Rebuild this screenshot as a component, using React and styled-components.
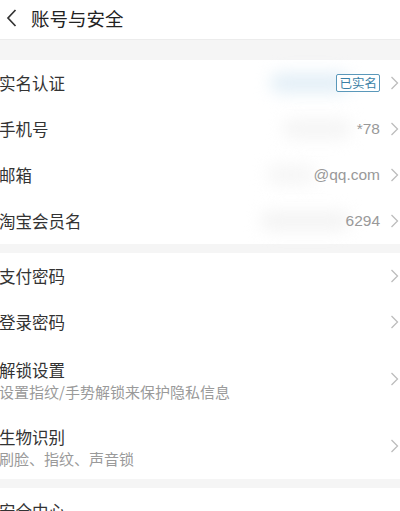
import React from "react";
import styled, { createGlobalStyle } from "styled-components";

const Global = createGlobalStyle`
  html, body { margin: 0; padding: 0; background: #f5f5f5; }
  body { font-family: "Noto Sans CJK SC", "Noto Sans", sans-serif; -webkit-font-smoothing: antialiased; }
`;

const Page = styled.div`
  width: 400px;
  height: 511px;
  overflow: hidden;
  background: #f5f5f5;
`;

const Header = styled.div`
  height: 39px;
  background: #fff;
  border-bottom: 1px solid #ececec;
  display: flex;
  align-items: center;
  padding-left: 6px;
  gap: 14px;
  margin-bottom: 20px;
`;

const Title = styled.div`
  font-size: 18.5px;
  color: #222;
  line-height: 24px;
  margin-top: -4px;
`;

const Section = styled.div`
  background: #fff;
  margin-bottom: 9px;
`;

const Row = styled.div`
  display: flex;
  align-items: center;
  height: ${(p) => (p.$tall ? "67px" : "46px")};
  padding: 0 1px 0 0;
  box-sizing: border-box;
`;

const Texts = styled.div`
  flex: 1;
  display: flex;
  flex-direction: column;
  align-self: ${(p) => (p.$tall ? "flex-start" : "center")};
  padding-top: ${(p) => (p.$tall ? "15px" : "0")};
  margin-left: -1px;
`;

const Label = styled.div`
  font-size: 16.5px;
  line-height: 21px;
  color: #333;
`;

const Sub = styled.div`
  font-size: 15px;
  line-height: 20px;
  margin-top: 1px;
  color: #9a9a9a;
`;

const Value = styled.div`
  position: relative;
  font-family: "Liberation Sans", Arial, sans-serif;
  font-size: 15.5px;
  color: #999;
  margin-right: 10px;
  display: flex;
  align-items: center;
`;

const Blur = styled.span`
  position: absolute;
  right: ${(p) => p.$right}px;
  width: ${(p) => p.$w}px;
  height: 20px;
  border-radius: 10px;
  background: ${(p) => p.$color};
  filter: blur(8px);
`;

const Badge = styled.span`
  position: relative;
  font-family: "Noto Sans CJK SC", sans-serif;
  font-size: 12.5px;
  line-height: 16px;
  color: #3a7fa6;
  border: 1.5px solid #5a98ba;
  border-radius: 2px;
  padding: 0 2px;
  background: #fff;
`;

const Chevron = () => (
  <svg width="9" height="14" viewBox="0 0 9 14">
    <path d="M1.5 1 L7.5 7 L1.5 13" fill="none" stroke="#bdbdbd" strokeWidth="1.3" />
  </svg>
);

const BackIcon = () => (
  <svg width="11" height="18" viewBox="0 0 11 18" style={{ marginTop: -4 }}>
    <path d="M9.5 1 L2 9 L9.5 17" fill="none" stroke="#333" strokeWidth="1.7" />
  </svg>
);

const Item = ({ label, sub, value, children }) => (
  <Row $tall={!!sub}>
    <Texts $tall={!!sub}>
      <Label>{label}</Label>
      {sub && <Sub>{sub}</Sub>}
    </Texts>
    {(value || children) && <Value>{children}{value}</Value>}
    <Chevron />
  </Row>
);

export default function App() {
  return (
    <Page>
      <Global />
      <Header>
        <BackIcon />
        <Title>账号与安全</Title>
      </Header>
      <Section>
        <Item label="实名认证">
          <Blur $right={30} $w={80} $color="#e3eff7" />
          <Badge>已实名</Badge>
        </Item>
        <Item label="手机号">
          <Blur $right={28} $w={70} $color="#f5f5f5" />
          <span style={{ position: "relative" }}>*78</span>
        </Item>
        <Item label="邮箱">
          <Blur $right={64} $w={50} $color="#f6f6f6" />
          <span style={{ position: "relative" }}>@qq.com</span>
        </Item>
        <Item label="淘宝会员名">
          <Blur $right={30} $w={90} $color="#f4f4f4" />
          <span style={{ position: "relative" }}>6294</span>
        </Item>
      </Section>
      <Section>
        <Item label="支付密码" />
        <Item label="登录密码" />
        <Item label="解锁设置" sub="设置指纹/手势解锁来保护隐私信息" />
        <Item label="生物识别" sub="刷脸、指纹、声音锁" />
      </Section>
      <Section>
        <Row>
          <Texts style={{ paddingTop: 13, alignSelf: "flex-start" }}>
            <Label>安全中心</Label>
          </Texts>
        </Row>
      </Section>
    </Page>
  );
}
